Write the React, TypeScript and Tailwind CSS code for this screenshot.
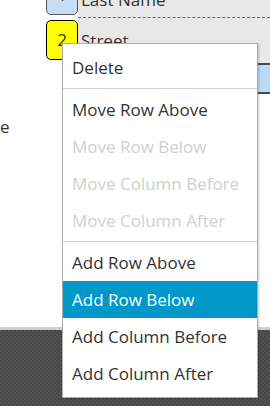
import React from "react";

const font = { fontFamily: '"Open Sans", "Noto Sans", sans-serif' };

type Item = { label: string; disabled?: boolean; active?: boolean } | "sep";

const items: Item[] = [
  { label: "Delete" },
  "sep",
  { label: "Move Row Above" },
  { label: "Move Row Below", disabled: true },
  { label: "Move Column Before", disabled: true },
  { label: "Move Column After", disabled: true },
  "sep",
  { label: "Add Row Above" },
  { label: "Add Row Below", active: true },
  { label: "Add Column Before" },
  { label: "Add Column After" },
];

function ContextMenu() {
  return (
    <div className="absolute left-[62px] top-[43px] w-[196px] border border-[#acacac] bg-white py-[5px] shadow-[1px_1px_2px_rgba(0,0,0,0.2)]">
      {items.map((it, i) =>
        it === "sep" ? (
          <div key={i} className="my-[2px] h-px bg-[#d2d2d2]" />
        ) : (
          <div
            key={i}
            className={
              "flex h-[37px] items-center pl-[9px] text-[17px] " +
              (it.active
                ? "bg-[#0097c9] text-white"
                : it.disabled
                ? "text-[#d0d0d0]"
                : "text-[#333333]")
            }
          >
            {it.label}
          </div>
        )
      )}
    </div>
  );
}

export default function App() {
  return (
    <div className="relative flex h-[406px] w-[270px] flex-col overflow-hidden bg-white" style={font}>
      {/* node rows */}
      <div className="flex h-[63px] overflow-hidden pl-[46px]">
        <div className="flex w-[32px] flex-col">
          <div className="-mt-[25px] flex h-[40px] items-center justify-center rounded-b-[5px] border border-[#555] bg-[#c6ddf6] text-[17px] text-[#333]">
            1
          </div>
          <div className="mt-[5px] flex h-[40px] items-center justify-center rounded-[5px] border-[1.5px] border-black bg-[#ffff00] text-[17px] text-[#333]">
            2
          </div>
        </div>
        <div className="flex flex-1 flex-col bg-[#e8e8e8]">
          <div className="flex h-[18px] items-end border-b border-dashed border-[#666]">
            <div className="-mb-[4px] flex h-[43px] shrink-0 items-center pl-[3px] text-[17px] text-[#333]">Last Name</div>
          </div>
          <div className="flex flex-1 items-center pl-[3px] text-[17px] text-[#333]">Street</div>
        </div>
      </div>

      {/* selected row */}
      <div className="ml-[78px] h-[31px] border-y-2 border-[#4a4a4a] bg-[#badafa]" />

      {/* property label */}
      <div className="mt-[21px] text-[17px] leading-[24px] text-[#333]">e</div>

      <div className="flex-1" />

      {/* canvas */}
      <div className="h-[3px] bg-[#cfcfcf]" />
      <div className="h-[76px] bg-[conic-gradient(#474747_25%,#525252_0_50%,#474747_0_75%,#525252_0)] bg-[length:4px_4px]" />

      <ContextMenu />
    </div>
  );
}
